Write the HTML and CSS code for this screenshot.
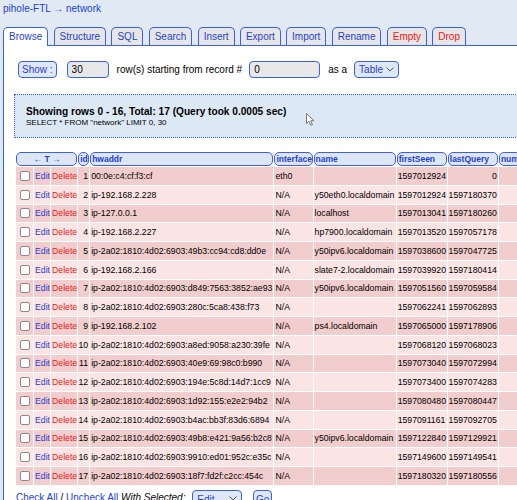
FILE: index.html
```html
<!DOCTYPE html>
<html lang="en">
<head>
    <meta charset="UTF-8">
    <title>pihole-FTL - network</title>
    <link rel="stylesheet" href="styles.css">
</head>
<body>
    <div class="crumb"><a href="#">pihole-FTL</a> → <a href="#">network</a></div>

    <ul class="tabs">
        <li class="active"><a href="#">Browse</a></li>
        <li><a href="#">Structure</a></li>
        <li><a href="#">SQL</a></li>
        <li><a href="#">Search</a></li>
        <li><a href="#">Insert</a></li>
        <li><a href="#">Export</a></li>
        <li><a href="#">Import</a></li>
        <li><a href="#">Rename</a></li>
        <li class="danger"><a href="#">Empty</a></li>
        <li class="danger"><a href="#">Drop</a></li>
    </ul>

    <div class="panel">
        <form class="browse-opts">
            <button type="button" class="btn">Show :</button>
            <input type="text" class="num-input" value="30">
            <span class="lbl">row(s) starting from record #</span>
            <input type="text" class="start-input" value="0">
            <span class="lbl">as a</span>
            <label class="select-wrap">
                <select class="select"><option>Table</option></select>
                <svg class="chev" width="8" height="5" viewBox="0 0 8 5"><polyline points="0.5,0.5 4,4 7.5,0.5" fill="none" stroke="#555" stroke-width="1"/></svg>
            </label>
        </form>

        <div class="query-info">
            <b>Showing rows 0 - 16, Total: 17 (Query took 0.0005 sec)</b>
            <span class="sql">SELECT * FROM "network" LIMIT 0, 30</span>
            <!-- mouse pointer caught in the screenshot -->
            <svg class="pointer" width="9" height="13" viewBox="0 0 9 13">
                <path d="M0.5,0.5 L0.5,10.5 L3,8.3 L4.8,12.3 L6.4,11.6 L4.7,7.7 L8,7.7 Z" fill="#fff" stroke="#777" stroke-width="1" stroke-linejoin="round"/>
            </svg>
        </div>

        <table class="rows">
            <colgroup>
                <col class="c-cb"><col class="c-edit"><col class="c-del"><col class="c-id">
                <col class="c-hw"><col class="c-if"><col class="c-name"><col class="c-first">
                <col class="c-last"><col class="c-num">
            </colgroup>
            <thead>
                <tr>
                    <th colspan="3">←&nbsp;T&nbsp;→</th>
                    <th>id</th>
                    <th>hwaddr</th>
                    <th>interface</th>
                    <th>name</th>
                    <th>firstSeen</th>
                    <th>lastQuery</th>
                    <th>numQueries</th>
                </tr>
            </thead>
            <tbody>
                <tr><td><span class="cb"></span></td><td><a href="#" class="edit">Edit</a></td><td><a href="#" class="del">Delete</a></td><td class="r">1</td><td>00:0e:c4:cf:f3:cf</td><td>eth0</td><td></td><td>1597012924</td><td class="r">0</td><td></td></tr>
                <tr><td><span class="cb"></span></td><td><a href="#" class="edit">Edit</a></td><td><a href="#" class="del">Delete</a></td><td class="r">2</td><td>ip-192.168.2.228</td><td>N/A</td><td>y50eth0.localdomain</td><td>1597012924</td><td class="r">1597180370</td><td></td></tr>
                <tr><td><span class="cb"></span></td><td><a href="#" class="edit">Edit</a></td><td><a href="#" class="del">Delete</a></td><td class="r">3</td><td>ip-127.0.0.1</td><td>N/A</td><td>localhost</td><td>1597013041</td><td class="r">1597180260</td><td></td></tr>
                <tr><td><span class="cb"></span></td><td><a href="#" class="edit">Edit</a></td><td><a href="#" class="del">Delete</a></td><td class="r">4</td><td>ip-192.168.2.227</td><td>N/A</td><td>hp7900.localdomain</td><td>1597013520</td><td class="r">1597057178</td><td></td></tr>
                <tr><td><span class="cb"></span></td><td><a href="#" class="edit">Edit</a></td><td><a href="#" class="del">Delete</a></td><td class="r">5</td><td>ip-2a02:1810:4d02:6903:49b3:cc94:cd8:dd0e</td><td>N/A</td><td>y50ipv6.localdomain</td><td>1597038600</td><td class="r">1597047725</td><td></td></tr>
                <tr><td><span class="cb"></span></td><td><a href="#" class="edit">Edit</a></td><td><a href="#" class="del">Delete</a></td><td class="r">6</td><td>ip-192.168.2.166</td><td>N/A</td><td>slate7-2.localdomain</td><td>1597039920</td><td class="r">1597180414</td><td></td></tr>
                <tr><td><span class="cb"></span></td><td><a href="#" class="edit">Edit</a></td><td><a href="#" class="del">Delete</a></td><td class="r">7</td><td>ip-2a02:1810:4d02:6903:d849:7563:3852:ae93</td><td>N/A</td><td>y50ipv6.localdomain</td><td>1597051560</td><td class="r">1597059584</td><td></td></tr>
                <tr><td><span class="cb"></span></td><td><a href="#" class="edit">Edit</a></td><td><a href="#" class="del">Delete</a></td><td class="r">8</td><td>ip-2a02:1810:4d02:6903:280c:5ca8:438:f73</td><td>N/A</td><td></td><td>1597062241</td><td class="r">1597062893</td><td></td></tr>
                <tr><td><span class="cb"></span></td><td><a href="#" class="edit">Edit</a></td><td><a href="#" class="del">Delete</a></td><td class="r">9</td><td>ip-192.168.2.102</td><td>N/A</td><td>ps4.localdomain</td><td>1597065000</td><td class="r">1597178906</td><td></td></tr>
                <tr><td><span class="cb"></span></td><td><a href="#" class="edit">Edit</a></td><td><a href="#" class="del">Delete</a></td><td class="r">10</td><td>ip-2a02:1810:4d02:6903:a8ed:9058:a230:39fe</td><td>N/A</td><td></td><td>1597068120</td><td class="r">1597068023</td><td></td></tr>
                <tr><td><span class="cb"></span></td><td><a href="#" class="edit">Edit</a></td><td><a href="#" class="del">Delete</a></td><td class="r">11</td><td>ip-2a02:1810:4d02:6903:40e9:69:98c0:b990</td><td>N/A</td><td></td><td>1597073040</td><td class="r">1597072994</td><td></td></tr>
                <tr><td><span class="cb"></span></td><td><a href="#" class="edit">Edit</a></td><td><a href="#" class="del">Delete</a></td><td class="r">12</td><td>ip-2a02:1810:4d02:6903:194e:5c8d:14d7:1cc9</td><td>N/A</td><td></td><td>1597073400</td><td class="r">1597074283</td><td></td></tr>
                <tr><td><span class="cb"></span></td><td><a href="#" class="edit">Edit</a></td><td><a href="#" class="del">Delete</a></td><td class="r">13</td><td>ip-2a02:1810:4d02:6903:1d92:155:e2e2:94b2</td><td>N/A</td><td></td><td>1597080480</td><td class="r">1597080447</td><td></td></tr>
                <tr><td><span class="cb"></span></td><td><a href="#" class="edit">Edit</a></td><td><a href="#" class="del">Delete</a></td><td class="r">14</td><td>ip-2a02:1810:4d02:6903:b4ac:bb3f:83d6:6894</td><td>N/A</td><td></td><td>1597091161</td><td class="r">1597092705</td><td></td></tr>
                <tr><td><span class="cb"></span></td><td><a href="#" class="edit">Edit</a></td><td><a href="#" class="del">Delete</a></td><td class="r">15</td><td>ip-2a02:1810:4d02:6903:49b8:e421:9a56:b2c8</td><td>N/A</td><td>y50ipv6.localdomain</td><td>1597122840</td><td class="r">1597129921</td><td></td></tr>
                <tr><td><span class="cb"></span></td><td><a href="#" class="edit">Edit</a></td><td><a href="#" class="del">Delete</a></td><td class="r">16</td><td>ip-2a02:1810:4d02:6903:9910:ed01:952c:e35c</td><td>N/A</td><td></td><td>1597149600</td><td class="r">1597149541</td><td></td></tr>
                <tr><td><span class="cb"></span></td><td><a href="#" class="edit">Edit</a></td><td><a href="#" class="del">Delete</a></td><td class="r">17</td><td>ip-2a02:1810:4d02:6903:18f7:fd2f:c2cc:454c</td><td>N/A</td><td></td><td>1597180320</td><td class="r">1597180556</td><td></td></tr>
            </tbody>
        </table>

        <div class="footer">
            <a href="#">Check All</a> / <a href="#">Uncheck All</a> <i>With Selected:</i>
            <label class="select-wrap wide">
                <select class="select"><option>Edit</option></select>
                <svg class="chev" width="8" height="5" viewBox="0 0 8 5"><polyline points="0.5,0.5 4,4 7.5,0.5" fill="none" stroke="#555" stroke-width="1"/></svg>
            </label>
            <button type="button" class="btn go">Go</button>
        </div>
    </div>
</body>
</html>
```

FILE: styles.css
```css
body {
    margin: 0;
    background-color: #e1e9f4;
    font-family: "Liberation Sans", Arial, sans-serif;
    font-size: 10px;
    color: #000;
    overflow: hidden;
}

a {
    color: #1f3fd2;
    text-decoration: none;
}

.crumb {
    padding: 3px 3px 0;
    line-height: 12px;
    margin-bottom: 12px;
    color: #1f3fd2;
}

.tabs {
    display: flex;
    list-style: none;
    margin: 0 0 0 3px;
    padding: 0;
}

    .tabs li {
        height: 17px;
        line-height: 17px;
        padding: 0 5px;
        margin-right: 5.25px;
        border: 1px solid #3d5ff0;
        border-bottom: 0;
        border-radius: 5px 5px 0 0;
        background-color: #e6e6e6;
    }

    .tabs li.active {
        background-color: #fff;
        height: 18px;
        margin-bottom: -1px;
        position: relative;
        z-index: 1;
    }

    .tabs li.danger a {
        color: #f01818;
    }

.panel {
    margin-left: 3px;
    border-top: 1px solid #3d5ff0;
    border-left: 1px solid #3d5ff0;
    background-color: #fff;
    padding: 15px 0 0 10px;
    height: 460px;
    overflow: hidden;
}

.browse-opts {
    display: flex;
    align-items: center;
    margin: 0 0 16px 4px;
    height: 17px;
}

.btn {
    font: inherit;
    color: #1f3fd2;
    background-color: #dfe8f8;
    border: 1px solid #3d5ff0;
    border-radius: 4px;
    height: 17px;
    padding: 0 3px;
    margin: 0;
}

.num-input, .start-input {
    font: inherit;
    height: 17px;
    box-sizing: border-box;
    background-color: #e8e8e8;
    border: 1px solid #3d5ff0;
    border-radius: 4px;
    padding: 0 4px;
    margin: 0;
    outline: none;
}

.num-input {
    width: 42px;
    margin-left: 10px;
}

.start-input {
    width: 71px;
    margin-left: 7px;
}

.lbl {
    margin-left: 8px;
}

.select-wrap {
    position: relative;
    display: inline-block;
    vertical-align: middle;
    margin-left: 7px;
    height: 17px;
}

.select {
    -webkit-appearance: none;
    appearance: none;
    display: block;
    font: inherit;
    color: #1f3fd2;
    background-color: #dfe8f8;
    border: 1px solid #3d5ff0;
    border-radius: 4px;
    height: 17px;
    width: 45px;
    padding: 0 0 0 4px;
    margin: 0;
}

.chev {
    position: absolute;
    right: 5px;
    top: 6px;
    pointer-events: none;
}

.query-info {
    position: relative;
    width: 600px;
    height: 44px;
    box-sizing: border-box;
    padding: 11px 0 0 11px;
    background-color: #dde8f5;
    border: 1px dotted #3d5ff0;
}

    .query-info b {
        display: block;
        font-size: 10.15px;
        line-height: 12px;
    }

    .query-info .sql {
        display: block;
        font-size: 8px;
        line-height: 10px;
    }

.pointer {
    position: absolute;
    left: 291px;
    top: 18px;
}

.rows {
    margin: 13px 0 0 1px;
    border-collapse: separate;
    border-spacing: 1px;
    table-layout: fixed;
    width: 525px;
    background-color: #fff;
    font-size: 8.7px;
}

.c-cb { width: 17px; }
.c-edit { width: 16px; }
.c-del { width: 26px; }
.c-id { width: 11px; }
.c-hw { width: 183px; }
.c-if { width: 38px; }
.c-name { width: 82px; }
.c-first { width: 50px; }
.c-last { width: 50px; }
.c-num { width: 40px; }

.rows th {
    height: 12px;
    padding: 0 0 0 1px;
    text-align: left;
    font-size: 8.5px;
    color: #1f3fd2;
    background-color: #dde6f4;
    border: 1px solid #3d5ff0;
    border-radius: 5px;
    white-space: nowrap;
    overflow: visible;
    line-height: 12px;
}

    .rows th[colspan] {
        text-align: center;
    }

.rows td {
    height: 17.76px;
    padding: 0 0 0 1px;
    white-space: nowrap;
    overflow: hidden;
    background-color: #f2cdcd;
}

.rows tbody tr:nth-child(even) td {
    background-color: #fae4e4;
}

.rows td.r {
    text-align: right;
    padding: 0 1px 0 0;
}

.rows .edit {
    color: #1f3fd2;
}

.rows .del {
    color: #f01818;
}

.cb {
    display: block;
    width: 10px;
    height: 10px;
    margin: 0 auto;
    box-sizing: border-box;
    border: 1px solid #8a8a8a;
    border-radius: 2px;
    background-color: #fff;
}

.footer {
    margin: 3px 0 0 2px;
    line-height: 18px;
    white-space: nowrap;
}

    .footer .wide {
        margin-left: 4px;
    }

        .footer .wide .select {
            width: 50px;
        }

    .footer .go {
        vertical-align: middle;
        margin-left: 8px;
        padding: 0 2px;
    }
```
